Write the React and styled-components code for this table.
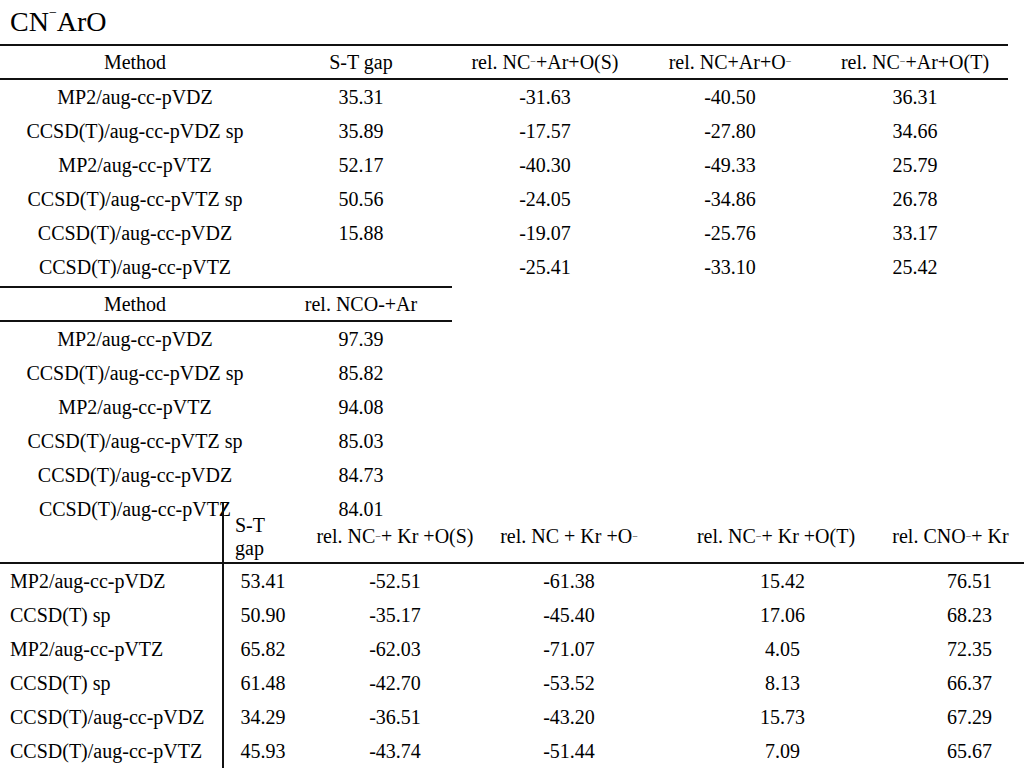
import React from 'react';
import styled, { createGlobalStyle } from 'styled-components';

const GlobalStyle = createGlobalStyle`
  html, body {
    margin: 0;
    padding: 0;
    background: #fff;
  }
  body {
    font-family: "Liberation Serif", "Times New Roman", serif;
    color: #000;
  }
`;

const Page = styled.div`
  width: 1024px;
  height: 768px;
  overflow: hidden;
  font-size: 20px;
`;

const Title = styled.h1`
  margin: 0;
  height: 44px;
  padding-left: 10px;
  font-size: 28px;
  font-weight: normal;
  line-height: 44px;
`;

// small raised minus, as in NC⁻
const Sup = styled.span`
  font-size: 0.5em;
  line-height: 0;
  vertical-align: 1em;
`;

const Table = styled.div`
  display: grid;
  grid-template-columns: ${p => p.$cols};
  width: ${p => p.$width}px;
  margin-top: ${p => p.$offset || 0}px;
  border-top: ${p => (p.$ruled ? '2px solid #111' : 'none')};
`;

const HeadCell = styled.div`
  box-sizing: border-box;
  height: ${p => p.$height || 34}px;
  display: flex;
  align-items: center;
  justify-content: ${p => (p.$left ? 'flex-start' : 'center')};
  padding: ${p => p.$padTop || 0}px ${p => p.$padRight || 0}px 0 ${p => p.$padLeft || 0}px;
  border-bottom: 2px solid #111;
  border-right: ${p => (p.$divider ? '2px solid #111' : 'none')};
  line-height: 23px;
  white-space: ${p => (p.$wrap ? 'normal' : 'nowrap')};
`;

const Cell = styled.div`
  box-sizing: border-box;
  height: 34px;
  display: flex;
  align-items: center;
  justify-content: ${p => (p.$left ? 'flex-start' : 'center')};
  padding-left: ${p => (p.$left ? 10 : 0)}px;
  border-right: ${p => (p.$divider ? '2px solid #111' : 'none')};
  line-height: 23px;
  white-space: nowrap;
`;

const NC = () => (
  <>
    NC<Sup>−</Sup>
  </>
);

const arRows = [
  ['MP2/aug-cc-pVDZ', '35.31', '-31.63', '-40.50', '36.31'],
  ['CCSD(T)/aug-cc-pVDZ sp', '35.89', '-17.57', '-27.80', '34.66'],
  ['MP2/aug-cc-pVTZ', '52.17', '-40.30', '-49.33', '25.79'],
  ['CCSD(T)/aug-cc-pVTZ sp', '50.56', '-24.05', '-34.86', '26.78'],
  ['CCSD(T)/aug-cc-pVDZ', '15.88', '-19.07', '-25.76', '33.17'],
  ['CCSD(T)/aug-cc-pVTZ', '', '-25.41', '-33.10', '25.42'],
];

const ncoRows = [
  ['MP2/aug-cc-pVDZ', '97.39'],
  ['CCSD(T)/aug-cc-pVDZ sp', '85.82'],
  ['MP2/aug-cc-pVTZ', '94.08'],
  ['CCSD(T)/aug-cc-pVTZ sp', '85.03'],
  ['CCSD(T)/aug-cc-pVDZ', '84.73'],
  ['CCSD(T)/aug-cc-pVTZ', '84.01'],
];

const krRows = [
  ['MP2/aug-cc-pVDZ', '53.41', '-52.51', '-61.38', '15.42', '76.51'],
  ['CCSD(T) sp', '50.90', '-35.17', '-45.40', '17.06', '68.23'],
  ['MP2/aug-cc-pVTZ', '65.82', '-62.03', '-71.07', '4.05', '72.35'],
  ['CCSD(T) sp', '61.48', '-42.70', '-53.52', '8.13', '66.37'],
  ['CCSD(T)/aug-cc-pVDZ', '34.29', '-36.51', '-43.20', '15.73', '67.29'],
  ['CCSD(T)/aug-cc-pVTZ', '45.93', '-43.74', '-51.44', '7.09', '65.67'],
];

export default function App() {
  return (
    <Page>
      <GlobalStyle />
      <Title>
        CN<Sup>−</Sup>ArO
      </Title>

      <Table $cols="270px 182px 186px 184px 186px" $width={1008} $ruled>
        <HeadCell>Method</HeadCell>
        <HeadCell>S-T gap</HeadCell>
        <HeadCell>
          rel. <NC />+Ar+O(S)
        </HeadCell>
        <HeadCell>
          rel. NC+Ar+O<Sup>−</Sup>
        </HeadCell>
        <HeadCell>
          rel. <NC />+Ar+O(T)
        </HeadCell>
        {arRows.map(row => row.map((v, i) => <Cell key={row[0] + i}>{v}</Cell>))}
      </Table>

      <Table $cols="270px 182px" $width={452} $offset={2} $ruled>
        <HeadCell>Method</HeadCell>
        <HeadCell>rel. NCO-+Ar</HeadCell>
        {ncoRows.map(row => row.map((v, i) => <Cell key={row[0] + i}>{v}</Cell>))}
      </Table>

      <Table $cols="224px 78px 186px 162px 265px 109px" $width={1024} $offset={-23}>
        <HeadCell $height={61} $divider />
        <HeadCell $height={61} $padTop={8} $padLeft={11} $padRight={12} $left $wrap>
          S-T gap
        </HeadCell>
        <HeadCell $height={61} $padTop={8}>
          rel. <NC /> + Kr +O(S)
        </HeadCell>
        <HeadCell $height={61} $padTop={8}>
          rel. NC + Kr +O<Sup>−</Sup>
        </HeadCell>
        <HeadCell $height={61} $padTop={8} $padRight={13}>
          rel. <NC /> + Kr +O(T)
        </HeadCell>
        <HeadCell $height={61} $padTop={8} $padRight={38}>
          rel. CNO<Sup>−</Sup> + Kr
        </HeadCell>
        {krRows.map((row, r) =>
          row.map((v, i) => (
            <Cell key={r + '-' + i} $left={i === 0} $divider={i === 0}>
              {v}
            </Cell>
          ))
        )}
      </Table>
    </Page>
  );
}
